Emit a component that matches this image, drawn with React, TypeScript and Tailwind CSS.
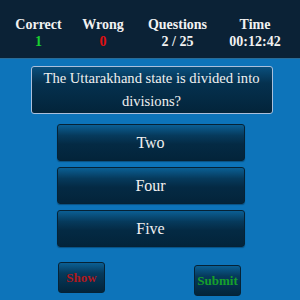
import React from "react";

const serif = { fontFamily: '"Liberation Serif", "Times New Roman", serif' };

function Stat({ label, value, color }: { label: string; value: string; color: string }) {
  return (
    <div className="flex flex-col items-center leading-none">
      <span className="text-[14px] font-bold text-[#f2f2f2]">{label}</span>
      <span className={`mt-[3px] text-[14px] font-bold ${color}`}>{value}</span>
    </div>
  );
}

function Option({ text }: { text: string }) {
  return (
    <div className="flex h-[37px] w-[188px] items-center justify-center rounded-[3px] border border-[#062235] bg-[linear-gradient(to_bottom,#0b5f94_0%,#063a5c_30%,#042a44_55%,#03243a_100%)] text-[16px] text-[#f0f0f0] shadow-[0_1px_1px_rgba(0,0,0,0.3)]">
      {text}
    </div>
  );
}

export default function App() {
  return (
    <div className="flex h-[300px] w-[300px] flex-col bg-[#0d74ba]" style={serif}>
      <div className="grid h-[59px] grid-cols-[77px_52px_97px_58px] items-start border-b border-[#2a6c97] bg-[#0b2236] pt-[18px]">
        <Stat label="Correct" value="1" color="text-[#18d030]" />
        <Stat label="Wrong" value="0" color="text-[#e01010]" />
        <Stat label="Questions" value="2 / 25" color="text-[#f2f2f2]" />
        <Stat label="Time" value="00:12:42" color="text-[#f2f2f2]" />
      </div>
      <div className="mt-[7px] flex justify-center">
        <div className="ml-[3px] flex h-[48px] w-[242px] flex-col items-center justify-center rounded-[3px] border border-[#aac0dc] bg-[linear-gradient(to_bottom,#0a4f7c_0%,#05314f_35%,#03243a_100%)] text-[14.6px] leading-[23px] text-[#f0f0f0]">
          <span>The Uttarakhand state is divided into</span>
          <span>divisions?</span>
        </div>
      </div>
      <div className="mt-[10px] flex flex-col items-center gap-[6px] pl-[1px]">
        <Option text="Two" />
        <Option text="Four" />
        <Option text="Five" />
      </div>
      <div className="mt-[15px] flex items-start pl-[58px]">
        <div className="flex h-[31px] w-[47px] items-center justify-center rounded-[3px] border border-[#062235] bg-[linear-gradient(to_bottom,#0b5f94_0%,#063a5c_35%,#03243a_100%)] text-[13px] font-bold text-[#b0181c]">
          Show
        </div>
        <div className="ml-[89px] mt-[3px] flex h-[31px] w-[47px] items-center justify-center rounded-[3px] border border-[#062235] bg-[linear-gradient(to_bottom,#0b5f94_0%,#063a5c_35%,#03243a_100%)] text-[13px] font-bold text-[#17a02a]">
          Submit
        </div>
      </div>
    </div>
  );
}
